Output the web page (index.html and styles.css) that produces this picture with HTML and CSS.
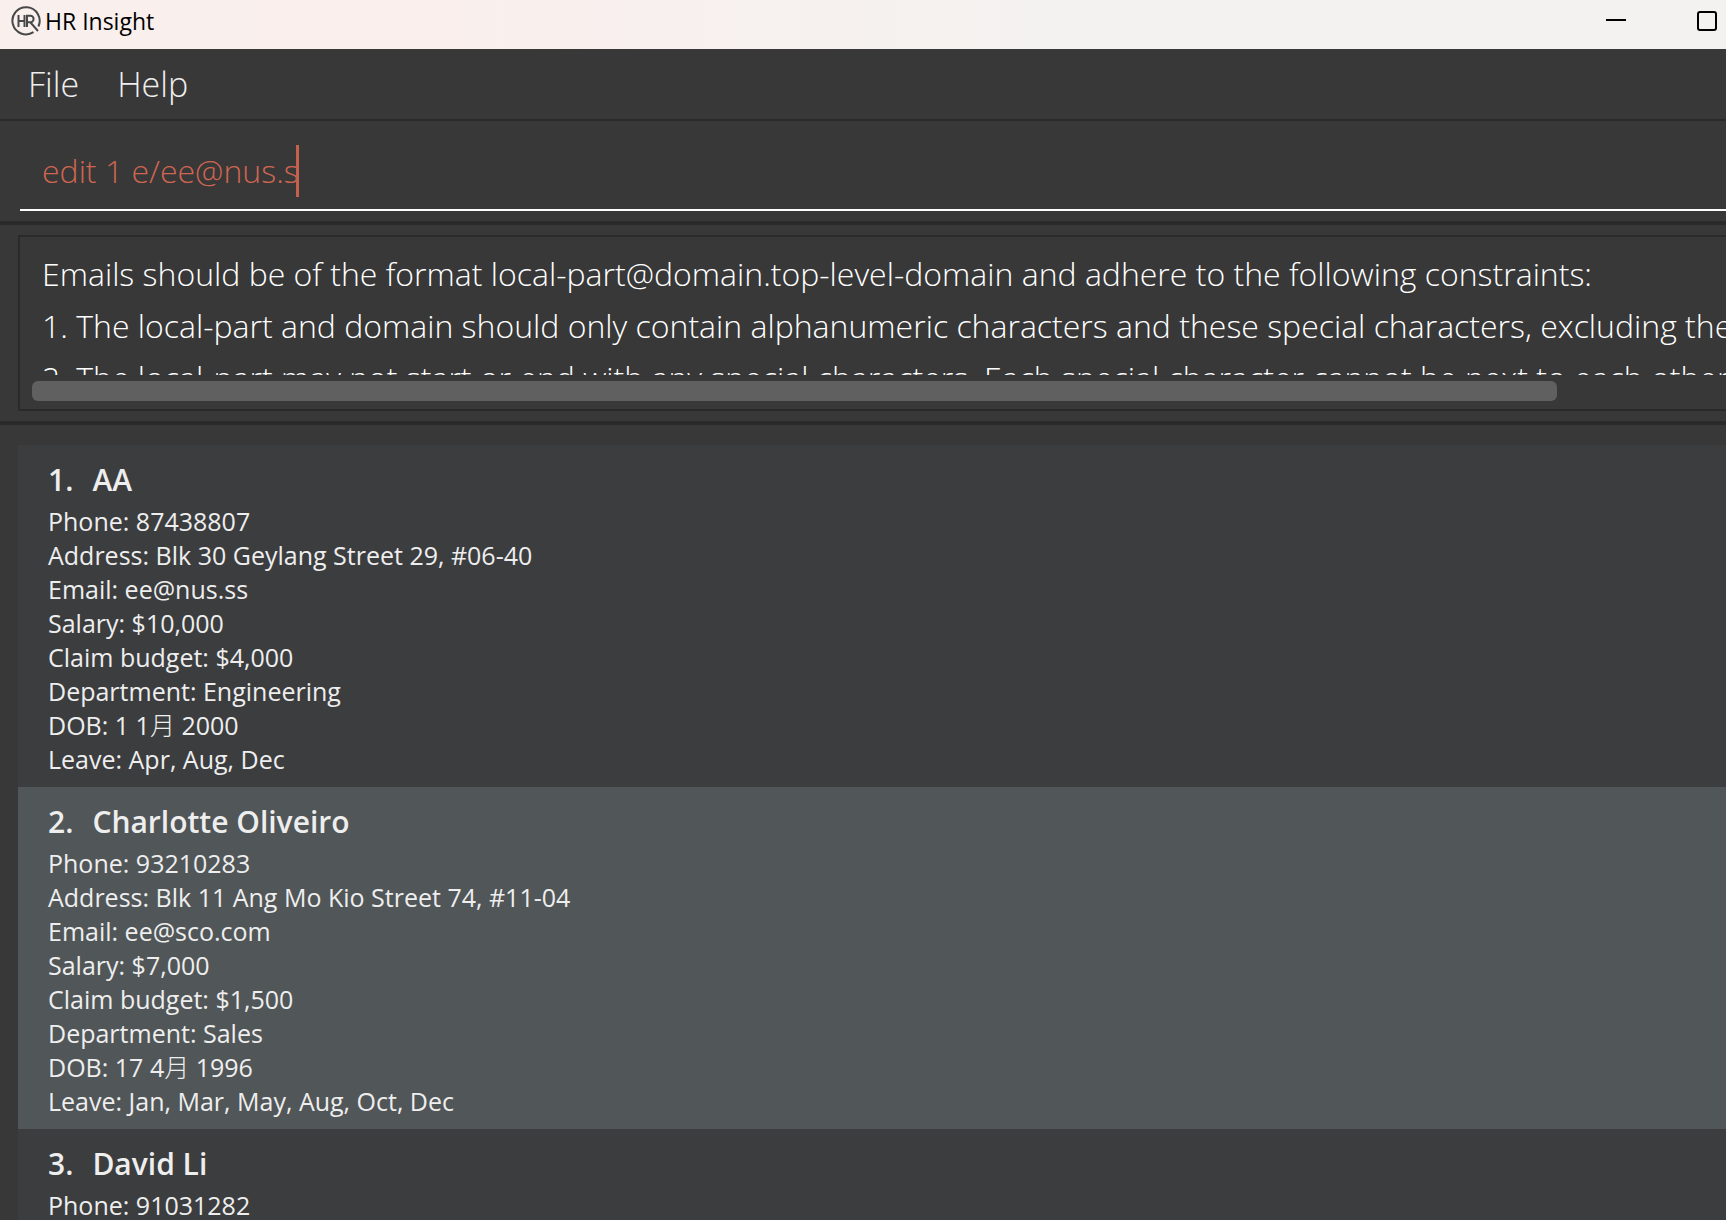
FILE: index.html
```html
<!DOCTYPE html>
<html lang="en">
<head>
<meta charset="utf-8">
<title>HR Insight</title>
<link rel="stylesheet" href="styles.css">
</head>
<body>
<div class="window">
  <header class="titlebar">
    <svg class="logo" viewBox="0 0 30 30" aria-hidden="true">
      <path d="M22.5 26.2A13.6 13.6 0 1 1 27.4 20.5"/>
      <path d="M7.5 9v12M13.5 9v12M7.5 15h6M16 21V9.8h3.400a3.200 3.200 0 0 1 0 6.400H16M19.500 16.500L27 25"/>
    </svg>
    <h1 class="title">HR Insight</h1>
    <div class="window-controls">
      <button class="control" type="button" aria-label="Minimize"><svg viewBox="0 0 20 20"><path d="M0 9h20"/></svg></button>
      <button class="control" type="button" aria-label="Maximize"><svg viewBox="0 0 20 20"><rect x="1" y="1" width="18" height="18" rx="2"/></svg></button>
    </div>
  </header>
  <nav class="menubar">
    <button class="menu" type="button">File</button>
    <button class="menu" type="button">Help</button>
  </nav>
  <div class="command-pane">
    <div class="command-box">
      <input class="command" type="text" aria-label="Command" size="14" value="edit 1 e/ee@nus.s" spellcheck="false"><span class="caret"></span>
    </div>
  </div>
  <section class="result-pane">
    <div class="result-box">
      <textarea class="result" aria-label="Result" readonly wrap="off" spellcheck="false">Emails should be of the format local-part@domain.top-level-domain and adhere to the following constraints:
1. The local-part and domain should only contain alphanumeric characters and these special characters, excluding the parentheses, (+_.-).
2. The local-part may not start or end with any special characters. Each special character cannot be next to each other.</textarea>
      <div class="scroll-track"><div class="scroll-thumb"></div></div>
    </div>
  </section>
  <main class="list-pane">
    <ol class="people">
      <li class="person">
        <h2 class="name"><span>1.</span><span>AA</span></h2>
        <p>Phone: 87438807</p>
        <p>Address: Blk 30 Geylang Street 29, #06-40</p>
        <p>Email: ee@nus.ss</p>
        <p>Salary: $10,000</p>
        <p>Claim budget: $4,000</p>
        <p>Department: Engineering</p>
        <p>DOB: 1 1<span class="han" lang="zh">月</span> 2000</p>
        <p>Leave: Apr, Aug, Dec</p>
      </li>
      <li class="person">
        <h2 class="name"><span>2.</span><span>Charlotte Oliveiro</span></h2>
        <p>Phone: 93210283</p>
        <p>Address: Blk 11 Ang Mo Kio Street 74, #11-04</p>
        <p>Email: ee@sco.com</p>
        <p>Salary: $7,000</p>
        <p>Claim budget: $1,500</p>
        <p>Department: Sales</p>
        <p>DOB: 17 4<span class="han" lang="zh">月</span> 1996</p>
        <p>Leave: Jan, Mar, May, Aug, Oct, Dec</p>
      </li>
      <li class="person">
        <h2 class="name"><span>3.</span><span>David Li</span></h2>
        <p>Phone: 91031282</p>
      </li>
    </ol>
  </main>
</div>
</body>
</html>
```
FILE: styles.css
```css
* {
  box-sizing: border-box;
}

body {
  margin: 0;
  background: #383838;
  color: #eeeeee;
  font-family: "Open Sans", "Noto Sans", "Noto Sans CJK SC", sans-serif;
}

button,
input,
textarea {
  margin: 0;
  padding: 0;
  border: 0;
  outline: 0;
  background: none;
  color: inherit;
  font-family: inherit;
}

.window {
  display: flex;
  flex-direction: column;
  height: 100vh;
  overflow: hidden;
}

.window > * {
  flex: none;
}

.titlebar {
  display: flex;
  align-items: center;
  height: 49px;
  padding: 0 9px 8px 11px;
  background: linear-gradient(90deg, #f9efed 0%, #faefed 25%, #f4f2f0 60%, #f4f2f0 100%);
  color: #000;
}

.logo {
  width: 30px;
  height: 30px;
  fill: none;
  stroke: #484848;
  stroke-width: 2;
}

.title {
  margin: 0 0 0 4px;
  font-size: 23px;
  font-weight: 400;
  line-height: 32px;
}

.window-controls {
  display: flex;
  gap: 71px;
  margin-left: auto;
}

.control {
  display: flex;
  padding: 0;
}

.control svg {
  width: 20px;
  height: 20px;
  fill: none;
  stroke: #000;
  stroke-width: 2;
}

.menubar {
  display: flex;
  gap: 38px;
  padding: 10px 28px;
  border-bottom: 2px solid #2a2a2a;
}

.menu {
  font-size: 34px;
  font-weight: 300;
  line-height: 50px;
}

.command-pane {
  padding: 24px 0 10px 20px;
  border-bottom: 4px solid #2a2a2a;
}

.command-box {
  display: flex;
  align-items: center;
  padding: 0 0 12px 22px;
  border-bottom: 2px solid #fff;
  color: #d06651;
}

.command {
  field-sizing: content;
  height: 52px;
  padding-bottom: 2px;
  font-size: 32px;
  font-weight: 300;
}

.caret {
  width: 3px;
  height: 52px;
  margin-left: -3px;
  background: #c4614e;
}

.result-pane {
  padding: 10px 0 10px 18px;
  border-bottom: 4px solid #2a2a2a;
}

.result-box {
  padding: 11px 0 8px 12px;
  border: 2px solid #2a2a2a;
  border-right: 0;
}

.result {
  display: block;
  width: 100%;
  height: 127px;
  padding-left: 10px;
  overflow: hidden;
  resize: none;
  color: #fff;
  font-size: 32px;
  font-weight: 300;
  line-height: 52px;
  white-space: pre;
}

.scroll-track {
  padding-top: 6px;
}

.scroll-thumb {
  width: 90%;
  height: 20px;
  border-radius: 6px;
  background: #606060;
}

.list-pane {
  padding: 20px 0 0 18px;
}

.people {
  margin: 0;
  padding: 0;
  list-style: none;
}

.person {
  padding: 11px 30px;
  background: #3c3d3f;
}

.person:nth-child(even) {
  background: #515658;
}

.name {
  display: flex;
  gap: 19px;
  margin: 0;
  font-size: 30px;
  font-weight: 600;
  line-height: 48px;
}

.person p {
  margin: 0;
  font-size: 25px;
  line-height: 34px;
}

.han {
  font-family: "Noto Sans CJK SC", sans-serif;
  font-weight: 300;
  line-height: 1;
}
```
